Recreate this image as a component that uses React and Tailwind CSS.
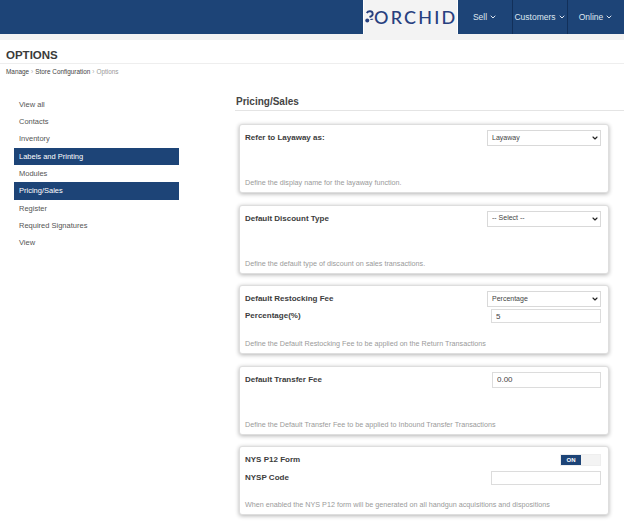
import React from 'react';
import { ChevronDown } from 'lucide-react';

const sideItems = [
  { label: 'View all' },
  { label: 'Contacts' },
  { label: 'Inventory' },
  { label: 'Labels and Printing', active: true },
  { label: 'Modules' },
  { label: 'Pricing/Sales', active: true },
  { label: 'Register' },
  { label: 'Required Signatures' },
  { label: 'View' },
];

const NavItem = ({ label, className }) => (
  <div className={`h-full flex items-center justify-center gap-[2px] text-[8.5px] text-[#dfe6f0] ${className}`}>
    {label}
    <ChevronDown className="w-[8px] h-[8px]" strokeWidth={3} />
  </div>
);

const Logo = () => (
  <div className="w-[95px] h-full bg-[#f3f3f3] flex items-center pl-[1px] border-x border-white">
    <svg width="9" height="16" viewBox="0 0 10 16" className="shrink-0">
      <path d="M2 3.5C3.5 1 8 1 8.5 4 9 6.5 6.5 7.5 5 8" fill="none" stroke="#27407f" strokeWidth="2.2" />
      <circle cx="2.5" cy="12" r="2.2" fill="#27407f" />
      <path d="M5 10.5c1.5-.8 3-.8 4.5-.2-1 1.2-3 1.6-4.5.2z" fill="#27407f" />
    </svg>
    <span className="text-[18px] leading-none font-['Lato',sans-serif] font-medium tracking-[2.2px] text-[#27407f]">ORCHID</span>
  </div>
);

const Card = ({ children, hint, className }) => (
  <div className={`h-[69px] bg-white border border-[#dedede] rounded-[3px] shadow-[0_1px_4px_rgba(0,0,0,0.3)] px-[5px] relative ${className}`}>
    {children}
    <p className="absolute left-[5px] bottom-[4px] text-[7.2px] leading-[10px] text-[#9a9a9a]">{hint}</p>
  </div>
);

const Row = ({ label, children, className, labelClass = 'leading-[14px]' }) => (
  <div className={`flex items-start justify-between pr-[2px] ${className}`}>
    <span className={`text-[8px] font-bold text-[#3c3c3c] ${labelClass}`}>{label}</span>
    {children}
  </div>
);

const Select = ({ value, options }) => (
  <div className="relative w-[114px] h-[16px]">
    <select
      defaultValue={value}
      className="block appearance-none w-full h-full bg-white border border-[#d9d9d9] text-[7px] text-[#444] pl-[4px] outline-none"
    >
      {options.map((o) => <option key={o}>{o}</option>)}
    </select>
    <ChevronDown className="absolute right-[2px] top-[4px] w-[8px] h-[8px] text-[#222] pointer-events-none" strokeWidth={3.5} />
  </div>
);

const Input = ({ value, className }) => (
  <input
    readOnly
    value={value}
    className={`block h-[14px] bg-white border border-[#dcdcdc] text-[8px] text-[#444] px-[4px] outline-none ${className}`}
  />
);

export default function App() {
  return (
    <div className="w-[624px] h-[529px] overflow-hidden bg-white font-['Liberation_Sans',Arial,sans-serif]">
      <header className="h-[34px] bg-[#1d4477] flex justify-end">
        <Logo />
        <NavItem label="Sell" className="w-[55px] border-r border-[#12305a]" />
        <NavItem label="Customers" className="w-[55px] border-r border-[#12305a]" />
        <NavItem label="Online" className="w-[56px]" />
      </header>
      <div className="h-[6px] bg-[#f3f3f3]"></div>

      <h1 className="h-[24px] pl-[6px] pt-[7px] text-[11.5px] leading-[17px] font-semibold text-[#3a3a3a] border-b border-[#eeeeee]">OPTIONS</h1>
      <div className="pl-[6px] pt-[4px] text-[6.4px] leading-[8px] text-[#444] flex gap-[2px]">
        <span>Manage</span>
        <span className="text-[#aaa]">›</span>
        <span>Store Configuration</span>
        <span className="text-[#aaa]">›</span>
        <span className="text-[#999]">Options</span>
      </div>

      <div className="flex mt-[11px]">
        <nav className="w-[165px] ml-[14px] mt-[8.5px] shrink-0">
          {sideItems.map((item) => (
            <div
              key={item.label}
              className={`h-[17.35px] pl-[5px] flex items-center text-[7.5px] ${item.active ? 'bg-[#1d4477] text-white' : 'text-[#555]'}`}
            >
              {item.label}
            </div>
          ))}
        </nav>

        <main className="flex-1 ml-[56px] mt-[6px]">
          <h2 className="h-[18px] pl-[1px] text-[10px] leading-[17px] font-bold text-[#444] border-b border-[#e4e4e4]">Pricing/Sales</h2>
          <div className="ml-[4px] w-[370px] mt-[13px] flex flex-col gap-[11.5px]">
            <Card hint="Define the display name for the layaway function.">
              <Row label="Refer to Layaway as:" className="pt-[5px]" labelClass="leading-[16px]">
                <Select value="Layaway" options={['Layaway']} />
              </Row>
            </Card>
            <Card hint="Define the default type of discount on sales transactions.">
              <Row label="Default Discount Type" className="pt-[5px]" labelClass="leading-[16px]">
                <Select value="-- Select --" options={['-- Select --']} />
              </Row>
            </Card>
            <Card hint="Define the Default Restocking Fee to be applied on the Return Transactions">
              <Row label="Default Restocking Fee" className="pt-[5px]" labelClass="leading-[16px]">
                <Select value="Percentage" options={['Percentage']} />
              </Row>
              <Row label="Percentage(%)" className="mt-[2px]">
                <Input value="5" className="w-[110px]" />
              </Row>
            </Card>
            <Card hint="Define the Default Transfer Fee to be applied to Inbound Transfer Transactions">
              <Row label="Default Transfer Fee" className="pt-[5px]" labelClass="leading-[16px]">
                <Input value="0.00" className="w-[109px] h-[16px]" />
              </Row>
            </Card>
            <Card hint="When enabled the NYS P12 form will be generated on all handgun acquisitions and dispositions">
              <Row label="NYS P12 Form" className="pt-[7px]" labelClass="leading-[12px]">
                <div className="flex w-[41px] h-[12px] border border-[#eeeeee]">
                  <span className="w-[20px] bg-[#1d4477] text-white text-[6px] font-bold flex items-center justify-center">ON</span>
                  <span className="flex-1 bg-[#f3f3f3]"></span>
                </div>
              </Row>
              <Row label="NYSP Code" className="mt-[5px]">
                <Input value="" className="w-[110px]" />
              </Row>
            </Card>
          </div>
        </main>
      </div>
    </div>
  );
}
